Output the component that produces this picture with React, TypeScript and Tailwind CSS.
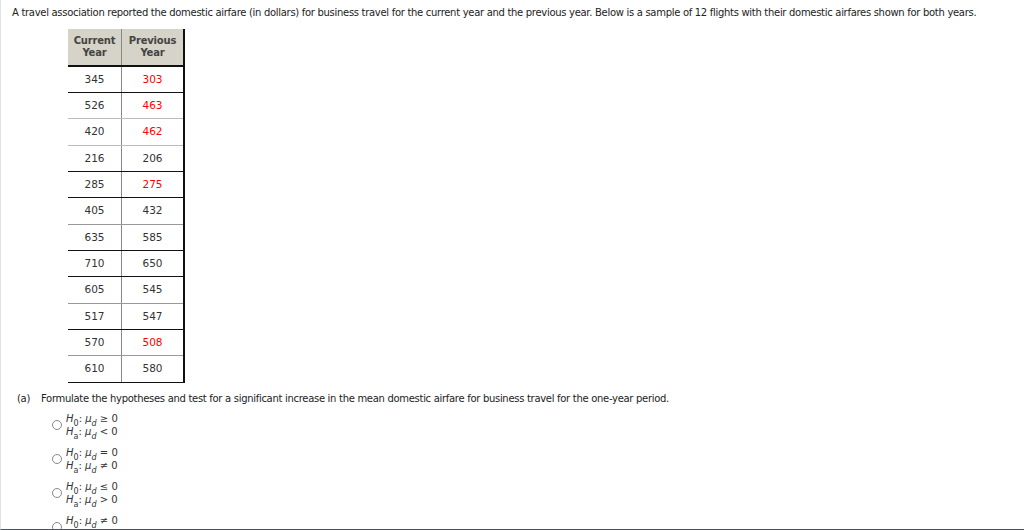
const rows: { cur: string; prev: string; red: boolean; line: string; h: string }[] = [
  { cur: "345", prev: "303", red: true, line: "border-[#111]", h: "h-[26px]" },
  { cur: "526", prev: "463", red: true, line: "border-[#bbb]", h: "h-[26px]" },
  { cur: "420", prev: "462", red: true, line: "border-[#bbb]", h: "h-[27px]" },
  { cur: "216", prev: "206", red: false, line: "border-[#111]", h: "h-[26px]" },
  { cur: "285", prev: "275", red: true, line: "border-[#111]", h: "h-[26px]" },
  { cur: "405", prev: "432", red: false, line: "border-[#999]", h: "h-[27px]" },
  { cur: "635", prev: "585", red: false, line: "border-[#111]", h: "h-[26px]" },
  { cur: "710", prev: "650", red: false, line: "border-[#111]", h: "h-[26px]" },
  { cur: "605", prev: "545", red: false, line: "border-[#999]", h: "h-[27px]" },
  { cur: "517", prev: "547", red: false, line: "border-[#111]", h: "h-[26px]" },
  { cur: "570", prev: "508", red: true, line: "border-[#999]", h: "h-[26px]" },
  { cur: "610", prev: "580", red: false, line: "border-[#111]", h: "h-[27px]" },
];

const options = [
  { h0: "≥ 0", ha: "< 0" },
  { h0: "= 0", ha: "≠ 0" },
  { h0: "≤ 0", ha: "> 0" },
  { h0: "≠ 0", ha: "= 0" },
];

const Hyp = ({ sub, rel }: { sub: string; rel: string }) => (
  <div className="leading-[13px] whitespace-nowrap">
    <span className="italic">H</span>
    <sub className="text-[8px] align-[-2px]">{sub}</sub>
    <span>: </span>
    <span className="italic">μ</span>
    <sub className="text-[8px] italic align-[-2px]">d</sub>
    <span> {rel}</span>
  </div>
);

const App = () => {
  return (
    <div
      className="h-[530px] overflow-hidden bg-white border-b border-l border-b-[#4a5264] border-l-[#e2e2e2] text-[#222] text-[10px] tracking-[-0.3px]"
      style={{ fontFamily: "Verdana, 'DejaVu Sans', sans-serif" }}
    >
      <div className="pl-[11px] pt-[6px] leading-[14px] whitespace-nowrap">
        A travel association reported the domestic airfare (in dollars) for business travel for the current year and the
        previous year. Below is a sample of 12 flights with their domestic airfares shown for both years.
      </div>

      <div className="ml-[67px] mt-[9px] w-[117px] border-r-2 border-[#111] tracking-normal">
        <div className="flex h-[38px] bg-[#d6d3c8] border-b-2 border-[#111] font-bold text-[#444] leading-[12px] text-[10px] tracking-[-0.2px]">
          <div className="w-[54px] flex items-center justify-center text-center border-r border-[#888]">
            Current
            <br />
            Year
          </div>
          <div className="flex-1 flex items-center justify-center text-center">
            Previous
            <br />
            Year
          </div>
        </div>
        {rows.map((r, i) => (
          <div key={i} className={`flex border-b ${r.line} ${r.h} text-[10.5px]`}>
            <div className="w-[54px] flex items-center justify-center border-r border-[#888] text-[#333]">{r.cur}</div>
            <div className={`flex-1 flex items-center justify-center ${r.red ? "text-[#ff0000]" : "text-[#333]"}`}>
              {r.prev}
            </div>
          </div>
        ))}
      </div>

      <div className="flex mt-[9px] pl-[16px] leading-[14px] whitespace-nowrap">
        <span className="w-[24px]">(a)</span>
        <span>Formulate the hypotheses and test for a significant increase in the mean domestic airfare for business travel for the one-year period.</span>
      </div>

      <div className="pl-[51px] mt-[6px] flex flex-col gap-[8px] text-[10px] text-[#333] tracking-normal">
        {options.map((o, i) => (
          <div key={i} className="flex items-center gap-[4px]">
            <span className="w-[10px] h-[10px] rounded-full border border-[#888] bg-white" />
            <div>
              <Hyp sub="0" rel={o.h0} />
              <Hyp sub="a" rel={o.ha} />
            </div>
          </div>
        ))}
      </div>
    </div>
  );
};

export default App;
